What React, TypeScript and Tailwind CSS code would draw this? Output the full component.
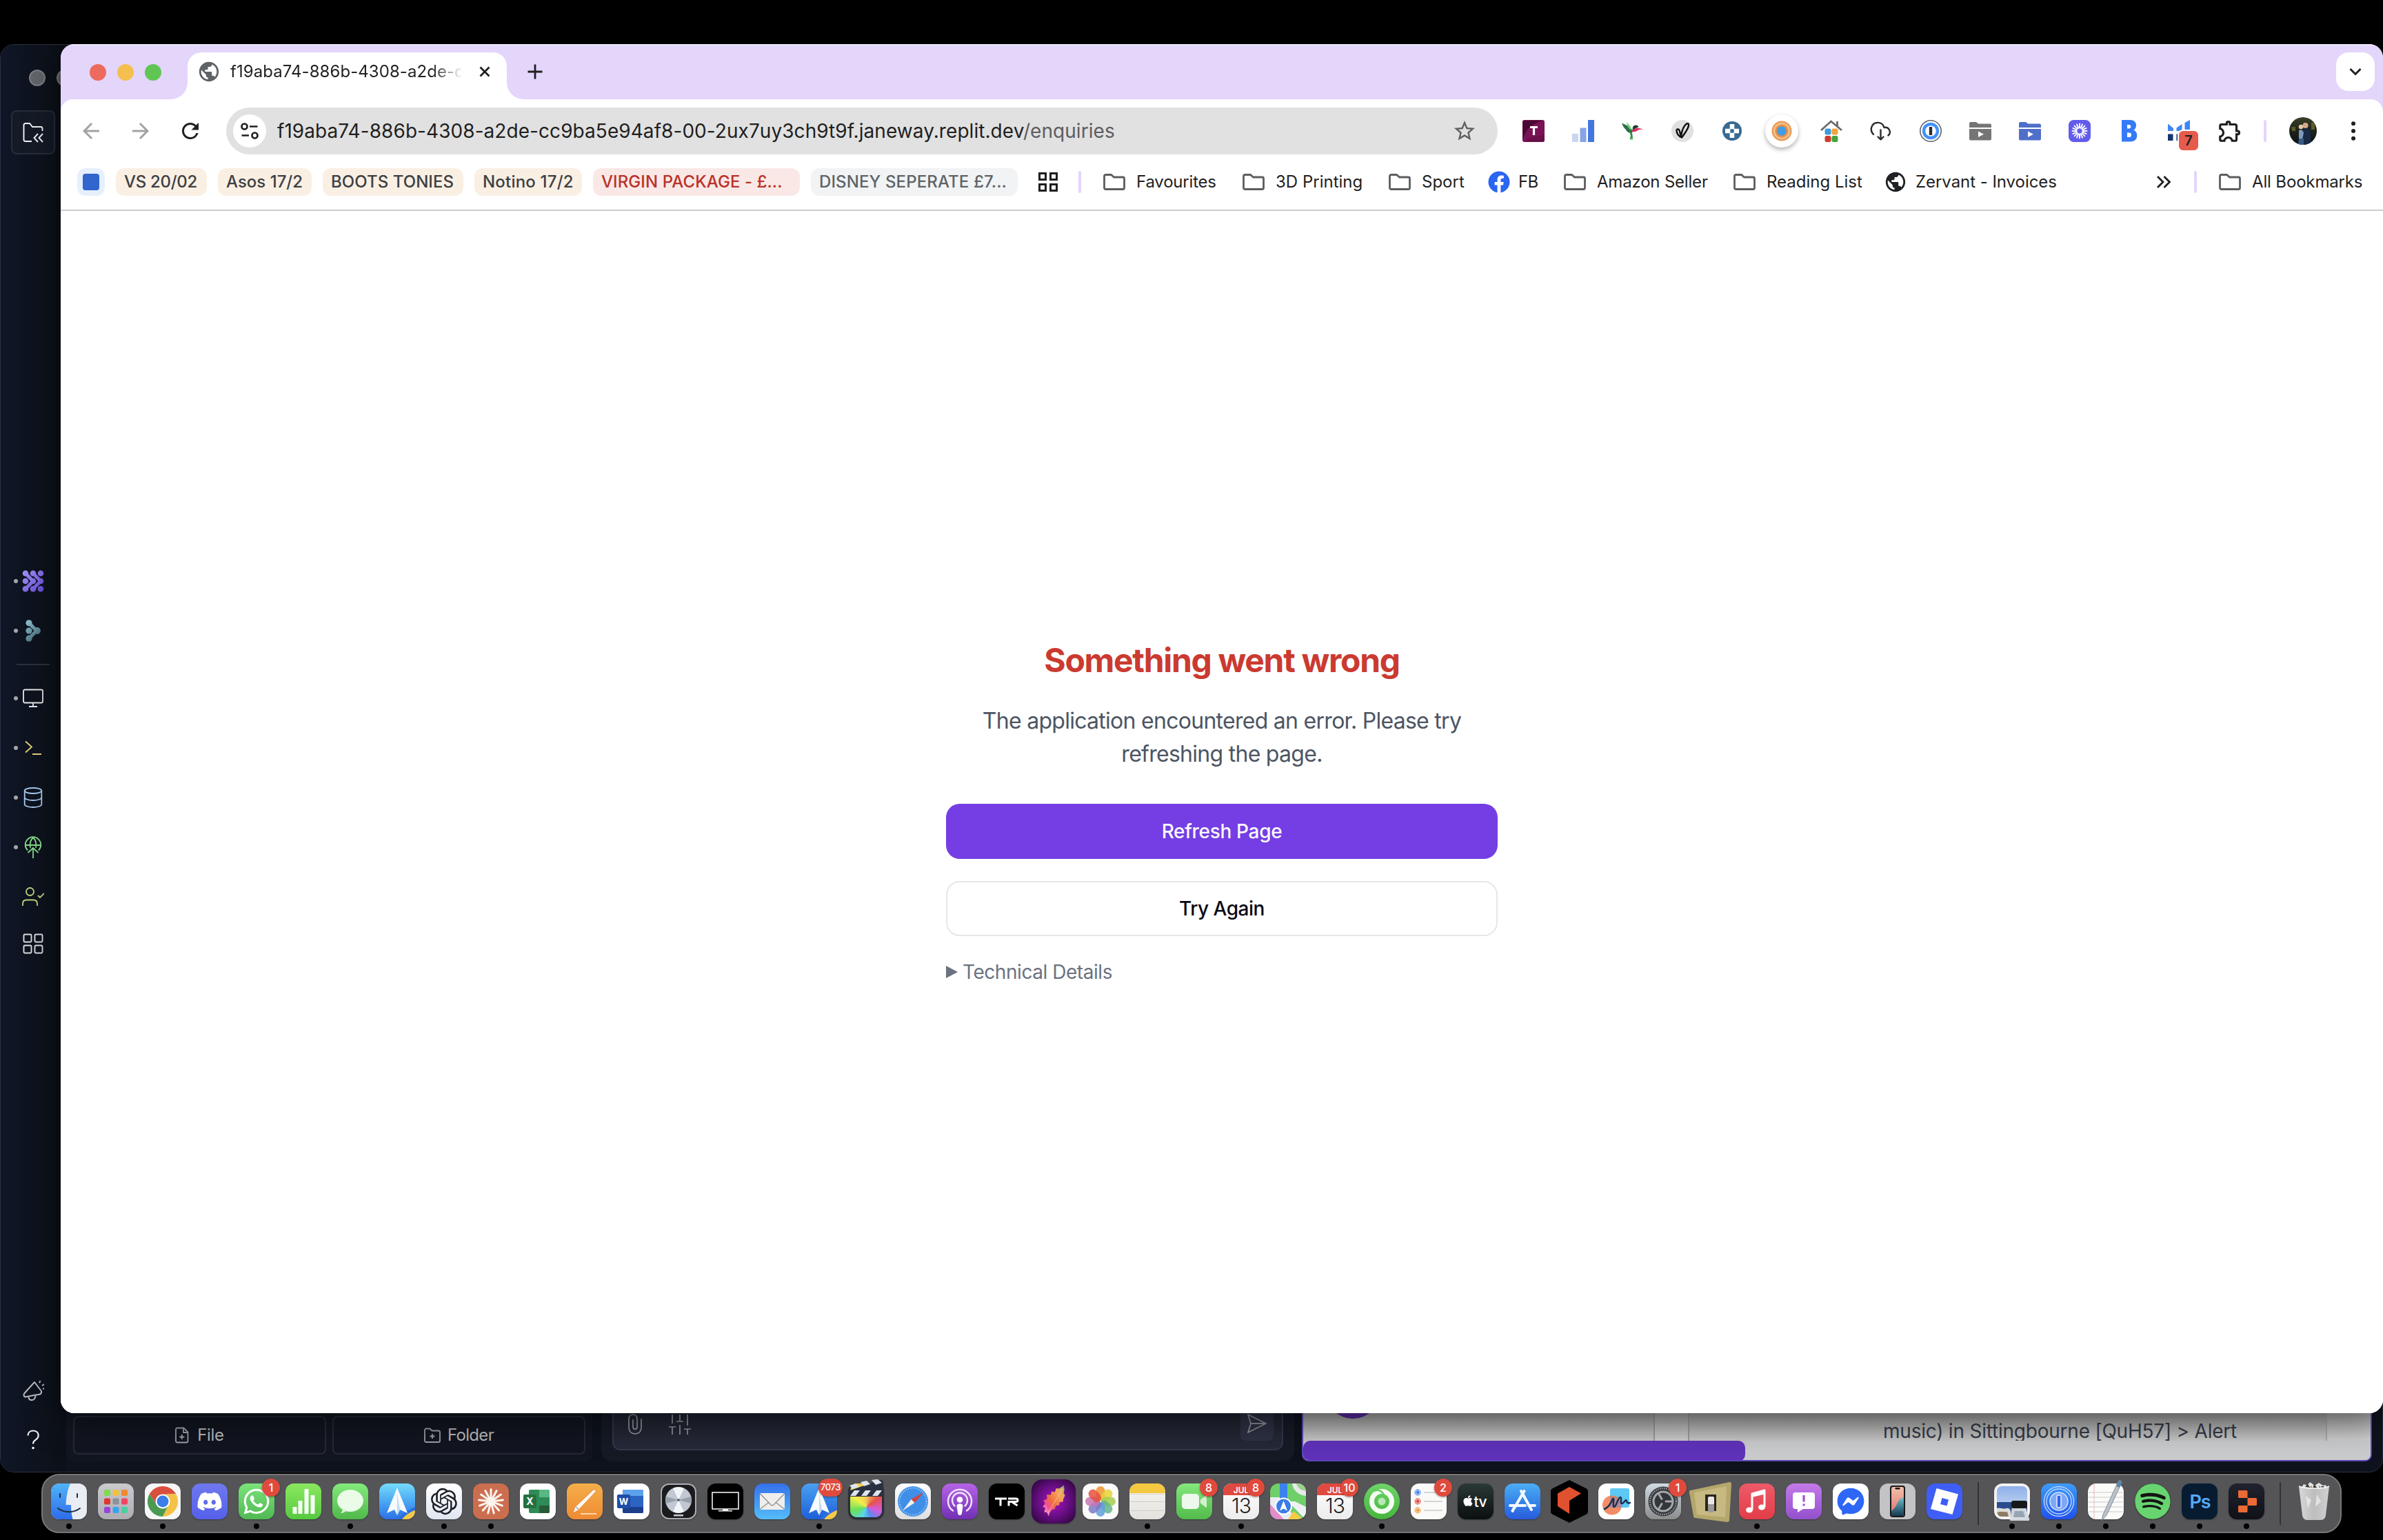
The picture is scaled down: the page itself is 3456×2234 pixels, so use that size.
import type { ReactNode } from "react";
import { MdPublic, MdStarBorder, MdOutlineExtension, MdRefresh, MdArrowBack, MdArrowForward } from "react-icons/md";
import { FaDiscord, FaWhatsapp, FaSpotify, FaFacebookMessenger, FaApple, FaFacebook } from "react-icons/fa";
import { RiOpenaiFill } from "react-icons/ri";

/* ---------- shared drawing helpers ---------- */

function Svg({ s = 32, children, className = "" }: { s?: number; children: ReactNode; className?: string }) {
  return (
    <svg viewBox={`0 0 ${s} ${s}`} width={s} height={s} fill="none" className={`shrink-0 ${className}`}>
      {children}
    </svg>
  );
}

function Rays({ n, r1, r2, w, c, color }: { n: number; r1: number; r2: number; w: number; c: number; color: string }) {
  return (
    <g stroke={color} strokeWidth={w} strokeLinecap="round">
      {Array.from({ length: n }, (_, i) => {
        const a = (i / n) * Math.PI * 2;
        return (
          <line
            key={i}
            x1={c + Math.sin(a) * r1}
            y1={c - Math.cos(a) * r1}
            x2={c + Math.sin(a) * r2}
            y2={c - Math.cos(a) * r2}
          />
        );
      })}
    </g>
  );
}

/* ---------- editor window behind the browser ---------- */

const railItems: { dot: boolean; icon: ReactNode }[] = [
  {
    dot: true,
    icon: (
      <Svg>
        <defs>
          <linearGradient id="agent" x1="0" y1="0" x2="32" y2="32" gradientUnits="userSpaceOnUse">
            <stop offset="0" stopColor="#a596f3" />
            <stop offset="1" stopColor="#6448d8" />
          </linearGradient>
        </defs>
        <g fill="url(#agent)">
          <circle cx="5" cy="4.800" r="4.300" />
          <circle cx="5" cy="16" r="4.300" />
          <circle cx="5" cy="27.200" r="4.300" />
          <circle cx="16" cy="4.800" r="4.300" />
          <circle cx="16" cy="16" r="4.300" />
          <circle cx="16" cy="27.200" r="4.300" />
          <circle cx="27" cy="4.800" r="4.300" />
          <circle cx="27" cy="16" r="4.300" />
          <circle cx="27" cy="27.200" r="4.300" />
        </g>
        <path d="M5 4.800L16 16 5 27.200M16 4.800L27 16 16 27.200" stroke="url(#agent)" strokeWidth="4.800" strokeLinejoin="round" />
      </Svg>
    ),
  },
  {
    dot: true,
    icon: (
      <Svg>
        <defs>
          <linearGradient id="assist" x1="4" y1="2" x2="28" y2="30" gradientUnits="userSpaceOnUse">
            <stop offset="0" stopColor="#92c4d4" />
            <stop offset="1" stopColor="#3a5f6b" />
          </linearGradient>
        </defs>
        <g fill="url(#assist)">
          <circle cx="10" cy="4.800" r="4.600" />
          <circle cx="10" cy="16" r="4.600" />
          <circle cx="10" cy="27.200" r="4.600" />
          <circle cx="22" cy="16" r="4.900" />
        </g>
        <path d="M10 4.800L21 16 10 27.200" stroke="url(#assist)" strokeWidth="5" strokeLinejoin="round" />
      </Svg>
    ),
  },
  {
    dot: true,
    icon: (
      <Svg>
        <g stroke="#e6e8ea" strokeWidth="1.800">
          <rect x="2" y="3.500" width="28" height="19" rx="2" />
          <path d="M16 23v5M10 28h12" />
        </g>
      </Svg>
    ),
  },
  {
    dot: true,
    icon: (
      <Svg>
        <path d="M5 6.500l9 8-9 8M15 25h13" stroke="#e6d37c" strokeWidth="1.800" />
      </Svg>
    ),
  },
  {
    dot: true,
    icon: (
      <Svg>
        <g stroke="#a9cbf2" strokeWidth="1.800">
          <ellipse cx="16" cy="6" rx="12.300" ry="4" />
          <path d="M3.700 6v20c0 2 5.500 4 12.300 4s12.300-2 12.300-4V6" />
          <path d="M3.700 16c0 2 5.500 4 12.300 4s12.300-2 12.300-4" />
        </g>
      </Svg>
    ),
  },
  {
    dot: true,
    icon: (
      <Svg>
        <g stroke="#86dc88" strokeWidth="1.800">
          <path d="M8 20.500A11.300 11.300 0 1 1 24 20.500" />
          <path d="M4.700 13h22.600M12 17c-1-5 0-11 4-15 4 4 5 10 4 15" />
          <path d="M16 32V17.500M8.500 24l7.500-7 7.500 7" />
        </g>
      </Svg>
    ),
  },
  {
    dot: false,
    icon: (
      <Svg>
        <g stroke="#bcd77c" strokeWidth="1.800">
          <circle cx="11.500" cy="8.500" r="5.500" />
          <path d="M1 29v-3c0-3.500 2-5.500 5.500-5.500h10c3.500 0 5.500 2 5.500 5.500v3" />
          <path d="M23 14l3 3 6-6" />
        </g>
      </Svg>
    ),
  },
  {
    dot: false,
    icon: (
      <Svg>
        <g stroke="#dcdfe2" strokeWidth="1.900">
          <rect x="2.500" y="2.500" width="11" height="11" rx="1.500" />
          <rect x="18.500" y="2.500" width="11" height="11" rx="1.500" />
          <rect x="2.500" y="18.500" width="11" height="11" rx="1.500" />
          <rect x="18.500" y="18.500" width="11" height="11" rx="1.500" />
        </g>
      </Svg>
    ),
  },
];

function RailRow({ dot, children, short }: { dot: boolean; children: ReactNode; short?: boolean }) {
  return (
    <div className={`flex w-24 items-center pl-[19px] ${short ? "h-16" : "h-[72px]"}`}>
      <span className={`h-1.5 w-1.5 rounded-full ${dot ? "bg-[#a3a5aa]" : ""}`} />
      <span className="ml-1.5">{children}</span>
    </div>
  );
}

function Rail() {
  return (
    <div className="flex w-[95px] shrink-0 flex-col bg-linear-to-r from-[#0f1626] to-[#0c1017] pb-[10px]">
      <div className="flex h-[95px] items-center gap-4 pl-[41px]">
        <span className="h-6 w-6 shrink-0 rounded-full border-2 border-[#7d7f85] bg-[#63656c]" />
        <span className="h-6 w-6 shrink-0 rounded-full border-2 border-[#7d7f85] bg-[#63656c]" />
      </div>
      <div className="ml-[15px] flex h-16 w-16 items-center justify-center rounded-lg border-2 border-[#282d3b] bg-[#151a27]">
        <Svg>
          <path
            d="M14 29H5a2.500 2.500 0 0 1-2.500-2.500v-21A2.500 2.500 0 0 1 5 3h6l4 5h12a2.500 2.500 0 0 1 2.500 2.500V14"
            stroke="#f2f3f5"
            strokeWidth="1.900"
          />
          <path d="M23 18l-5.500 6 5.500 6M30 18l-5.500 6 5.500 6" stroke="#f2f3f5" strokeWidth="1.900" />
        </Svg>
      </div>
      <div className="h-[583px]" />
      {railItems.slice(0, 2).map((it, i) => (
        <RailRow key={i} dot={it.dot}>{it.icon}</RailRow>
      ))}
      <div className="flex h-[26px] items-center pl-[23px]">
        <span className="h-0.5 w-12 bg-[#2a303d]" />
      </div>
      {railItems.slice(2).map((it, i) => (
        <RailRow key={i} dot={it.dot} short={i === 5}>{it.icon}</RailRow>
      ))}
      <div className="mt-auto">
        <RailRow dot={false}>
          <Svg>
            <g stroke="#b9bbbf" strokeWidth="2" strokeLinejoin="round">
              <path d="M18 4L3.500 20c-1.500 2-1.200 4.500.5 5.500 9-1.500 16-3 22-4 2-1 2.500-2.500 2-4.500z" />
              <path d="M9.500 25.500c0 3 2 4.500 4.500 4.500s5-1.500 5.500-6.500" />
              <path d="M25 5l1.500-3M29 9l3-2M30 13.500h2.500" />
            </g>
          </Svg>
        </RailRow>
        <RailRow dot={false}>
          <Svg>
            <path d="M8.500 9.500C8.500 5.500 11.500 2.500 16 2.500s7.700 2.800 7.700 6.800c0 3-1.600 4.800-4 6.400-2.500 1.700-3.700 3-3.700 5.800" stroke="#f2f3f5" strokeWidth="2.200" />
            <circle cx="16" cy="27.500" r="1.800" fill="#f2f3f5" />
          </Svg>
        </RailRow>
      </div>
    </div>
  );
}

function FilePanel() {
  return (
    <div className="flex h-[100px] w-[763px] items-end gap-[9px] rounded-b-lg bg-[#121620] p-[10px] text-2xl tracking-[-0.3px] text-[#b9bbbf]">
      <div className="flex h-14 w-[367px] items-center justify-center gap-3 rounded-lg border-2 border-[#262a37] bg-[#12151f]">
        <svg width="20" height="24" viewBox="0 0 20 24" fill="none" stroke="#a0a2a8" strokeWidth="1.800">
          <path d="M3 1.500h9.500l6 6V20.500a2 2 0 0 1-2 2H3a2 2 0 0 1-2-2v-17a2 2 0 0 1 2-2z" />
          <path d="M12 1.500V8h6.500M9.800 11v7M6.300 14.500h7" />
        </svg>
        <span>File</span>
      </div>
      <div className="flex h-14 w-[367px] items-center justify-center rounded-lg border-2 border-[#262a37] bg-[#12151f]">
        <svg width="24" height="24" viewBox="0 0 24 24" fill="none" stroke="#a0a2a8" strokeWidth="1.800">
          <path d="M3 2.500h5.500l3 3H21a2 2 0 0 1 2 2v12.500a2 2 0 0 1-2 2H3a2 2 0 0 1-2-2v-15.500a2 2 0 0 1 2-2z" />
          <path d="M12 10v7M8.500 13.500h7" />
        </svg>
        <span className="ml-2.5 tracking-[-0.7px]">Folder</span>
      </div>
    </div>
  );
}

function ChatPanel() {
  return (
    <div className="ml-[13px] flex h-[100px] w-[1005px] items-end rounded-b-2xl bg-[#161a25] p-4">
      <div className="flex h-[84px] w-full items-end rounded-b-xl border-2 border-[#33364a] bg-linear-to-b from-[#1c202b] to-[#262938] pr-3 pb-3 pl-[14px]">
        <Svg className="mb-2">
          <path
            d="M26 8v12.500c0 6-3.500 9.500-9 9.500s-9-3.500-9-9.500V8.500c0-4 2.500-6.500 6-6.500s6 2.500 6 6.500V20c0 2-1.200 3.200-3 3.200s-3-1.200-3-3.200V9"
            stroke="#9597a0"
            strokeWidth="1.700"
          />
        </Svg>
        <Svg className="mb-2 ml-[34px]">
          <path
            d="M5 2v13M5 20v11M0 20h10M16 2v10M11 12h10M16 17v14M27 2v16M22 23h10M27 23v8"
            stroke="#9597a0"
            strokeWidth="1.700"
          />
        </Svg>
        <div className="ml-auto flex h-14 w-12 items-end justify-center rounded-lg bg-[#2e3144] pb-[11px]">
          <svg width="28" height="28" viewBox="0 0 28 28" fill="none" stroke="#8a8c92" strokeWidth="1.900" strokeLinejoin="round">
            <path d="M1 1l26 13L1 27l4-13zM5 14h22" />
          </svg>
        </div>
      </div>
    </div>
  );
}

function PreviewPanel() {
  return (
    <div className="ml-[11px] flex h-[100px] w-[1552px] flex-col overflow-hidden rounded-b-[10px] border-2 border-[#5b46b8] bg-[#c6c8ca]">
      <div className="flex h-[68px] bg-linear-to-b from-[#a2a2a2] from-40% to-[#c8c8c8]">
        <div className="flex w-[510px] items-start border-r-2 border-[#98989b] pl-8">
          <span className="mt-[-44px] h-20 w-20 rounded-full bg-[#5a2aa0]" />
        </div>
        <div className="w-[50px] border-r-2 border-[#9b9ba2] bg-white/10" />
        <div className="flex w-[925px] items-end border-r-2 border-[#a9a9ac] pl-[281px]">
          <span className="h-[34px] whitespace-nowrap text-[28px] leading-10 tracking-[-0.22px] text-[#343a48]">
            music) in Sittingbourne [QuH57] &gt; Alert
          </span>
        </div>
        <div className="grow bg-white/15" />
      </div>
      <div className="flex h-[28px] bg-[#c9cbcd]">
        <span className="h-[30px] w-[641px] rounded-r-[10px] rounded-tl-[10px] bg-[#5f32b9]" />
      </div>
    </div>
  );
}

function EditorWindow() {
  return (
    <div className="absolute top-16 left-0 flex h-[2072px] w-[3456px] overflow-hidden rounded-[20px] border border-[#2b3140] bg-[#0d121c]">
      <Rail />
      <div className="flex grow items-end pb-[15px]">
        <FilePanel />
        <ChatPanel />
        <PreviewPanel />
      </div>
    </div>
  );
}

/* ---------- browser window ---------- */

const extensionIcons: ReactNode[] = [
  <Svg>
    <rect width="32" height="32" rx="3" fill="#7a1355" />
    <path d="M2 24C6 12 16 4 30 1H3a3 3 0 0 0-3 3v24z" fill="#4a0733" />
    <path d="M2 32c6-6 16-9 30-10v7a3 3 0 0 1-3 3z" fill="#6a0f49" />
    <path d="M11 10.500h11M16.500 10.500V22" stroke="#fff" strokeWidth="3.200" />
  </Svg>,
  <Svg>
    <path d="M0 20h9v12H0z" fill="#c9d6f0" />
    <path d="M11.500 11.500h9V32h-9z" fill="#86a4e6" />
    <path d="M23 0h9v32h-9z" fill="#4277de" />
  </Svg>,
  <Svg>
    <path d="M0 4.500c4 1.500 8 3.500 12 6l4 4.500-1 4c-5 0-8-2-9-5C3.500 12 1.500 9 0 4.500z" fill="#2c7048" />
    <path d="M7 3l5 6 3 6-3.500-1.500-3-4z" fill="#6ed070" />
    <path d="M16 10c2-3 6-3.500 8.500 0l-5 2.500-4 3.500z" fill="#17402f" />
    <path d="M14.500 16.500c1.500-3 5-4.800 9-5l8 2c-4-.2-7 .5-9 2-2 1.500-4 2-6.500 1.800z" fill="#e0315f" />
    <path d="M11.500 17c2.500 1 4 2.500 4 5l.5 5-2 2-2.500-1.500 1.500-4z" fill="#2f8a45" />
    <path d="M12.500 26l3 .5.500 2.500-3-.5z" fill="#62e05a" />
  </Svg>,
  <Svg>
    <circle cx="16" cy="16" r="16" fill="#e0e0e0" />
    <path
      d="M15 25.500c-4-1.500-7.500-6-7.500-10 0-2.500 3-3 4-.5.800 2.500 1.500 5 2.500 8 1-6 3-14 8-17.500 3-1.500 3.500 1.500 2.500 4.500-1.500 4.500-5 9.500-9.500 15.500z"
      stroke="#0d0d0d"
      strokeWidth="2.400"
      strokeLinejoin="round"
    />
  </Svg>,
  <Svg>
    <circle cx="16" cy="16" r="14" fill="#396a92" />
    <path d="M12.700 6h6.600v6.700H26v6.600h-6.700V26h-6.600v-6.700H6v-6.600h6.700z" fill="#fff" />
    <rect x="13.300" y="13.300" width="5.400" height="5.400" fill="#396a92" />
  </Svg>,
  <div className="flex h-12 w-12 shrink-0 items-center justify-center rounded-full bg-white shadow-[0_3px_6px_rgba(0,0,0,0.3)]">
    <Svg>
      <circle cx="16" cy="16" r="14.500" fill="#e89a55" />
      <circle cx="16" cy="16" r="11" fill="none" stroke="#f3bf86" strokeWidth="2.500" />
      <circle cx="16" cy="16" r="8.500" fill="#e58a43" />
      <circle cx="16" cy="16" r="6.800" fill="#3f9fe6" />
    </Svg>
  </div>,
  <Svg>
    <path d="M1 15L15.500 2 31 15M24.500 2v7" stroke="#6b6b6b" strokeWidth="2.800" />
    <rect x="6.500" y="12.500" width="9" height="9" rx="2.500" fill="#3f9bdc" />
    <rect x="16.500" y="12.500" width="9" height="9" rx="2.500" fill="#f2a53a" />
    <rect x="6.500" y="23" width="9" height="9" rx="2.500" fill="#cf3a2c" />
    <rect x="16.500" y="23" width="9" height="9" rx="2.500" fill="#45a53c" />
  </Svg>,
  <Svg>
    <g stroke="#2b2b2b" strokeWidth="2.400" strokeLinecap="round" strokeLinejoin="round">
      <path d="M5 21C-1 15 2 5 10 4c5-.8 9 2 10.500 7 3-.8 6 .5 7.500 3.500 1.500 2.800.8 6-1.500 8" />
      <path d="M15.500 14.500V28M11.500 24.500l4 4 4-4" />
    </g>
  </Svg>,
  <Svg>
    <circle cx="16" cy="16" r="15.200" fill="#fff" stroke="#5f6368" strokeWidth="1.600" />
    <circle cx="16" cy="16" r="12.200" fill="#4290fb" />
    <circle cx="16" cy="16" r="7.800" fill="#fff" />
    <rect x="13.800" y="10" width="4.400" height="12" fill="#2c2c2c" />
  </Svg>,
  <Svg>
    <path d="M0 5a2 2 0 0 1 2-2h8l3 2.500h17a2 2 0 0 1 2 2V11H0zM0 13h32v14.500a2 2 0 0 1-2 2H2a2 2 0 0 1-2-2z" fill="#757575" />
    <path d="M13 16.500v8.500l8-4.250z" fill="#fff" />
  </Svg>,
  <Svg>
    <path d="M0 5a2 2 0 0 1 2-2h8l3 2.500h17a2 2 0 0 1 2 2V11H0zM0 13h32v14.500a2 2 0 0 1-2 2H2a2 2 0 0 1-2-2z" fill="#506fca" />
    <path d="M13 16.500v8.500l8-4.250z" fill="#fff" />
  </Svg>,
  <Svg>
    <rect width="32" height="32" rx="7.500" fill="#615cec" />
    <Rays n={16} r1={4.500} r2={10.500} w={1.900} c={16} color="#fff" />
  </Svg>,
  <Svg>
    <path
      fillRule="evenodd"
      d="M5 0h12c6 0 9 3 9 8 0 3-1.200 5.200-3.500 6.800 3.200 1.400 4.800 4 4.800 7.700 0 6-4 9-10 9H5zM13 7v5.500h2.500c1.800 0 2.800-1 2.800-2.800S17.300 7 15.500 7zM13 18.500V25h3c2 0 3-1.200 3-3.300s-1-3.200-3-3.200z"
      fill="#357bf8"
    />
  </Svg>,
  <div className="relative h-8 w-8">
    <Svg>
      <path d="M0 5.500l8 6.500V16H0z" fill="#3f87f5" />
      <path d="M12.500 11.500l8-5.500V16h-8z" fill="#3f87f5" />
      <path d="M24.500 4l7.500-4v16h-7.500z" fill="#3f87f5" />
      <path d="M0 20.500h7.500V30H0zM12.500 20.500h8V30h-8z" fill="#15356e" />
    </Svg>
    <span className="absolute top-3.5 left-3.5 flex h-[32px] w-[32px] items-center justify-center rounded-[8px] border-2 border-white bg-[#e55c4d] text-xl font-semibold text-[#202124]">
      7
    </span>
  </div>,
];

function TabStrip() {
  return (
    <div className="flex h-20 items-end bg-[#e4d5fb] pl-[42px] shadow-[inset_0_2px_0_#f0e8fd]">
      <div className="flex h-[78px] items-center gap-4 self-start pt-1">
        <span className="h-6 w-6 rounded-full bg-[#ec6a5e]" />
        <span className="h-6 w-6 rounded-full bg-[#f5bf4f]" />
        <span className="h-6 w-6 rounded-full bg-[#61c554]" />
      </div>
      <span className="ml-[14px] h-6 w-6 bg-[radial-gradient(circle_at_0_0,transparent_23.5px,white_24px)]" />
      <div className="flex h-[68px] w-[463px] items-center rounded-t-[20px] bg-white pb-3 pl-[14px]">
        <MdPublic className="h-[34px] w-[34px] shrink-0 text-[#5f6368]" />
        <span className="ml-3.5 w-[344px] bg-linear-to-r from-[#202124] from-85% to-transparent to-98% bg-clip-text text-2xl whitespace-nowrap tracking-[0.06px] text-transparent">
          f19aba74-886b-4308-a2de-c
        </span>
        <svg width="16" height="16" viewBox="0 0 16 16" className="ml-[17px] shrink-0">
          <path d="M1.500 1.500l13 13M14.500 1.500l-13 13" stroke="#1f1f1f" strokeWidth="2.800" />
        </svg>
      </div>
      <span className="h-6 w-6 bg-[radial-gradient(circle_at_100%_0,transparent_23.5px,white_24px)]" />
      <svg width="22" height="22" viewBox="0 0 22 22" className="mb-[29px] ml-[6px]">
        <path d="M11 0.500v21M0.500 11h21" stroke="#1f1f1f" strokeWidth="2.800" />
      </svg>
      <div className="mr-3 mb-3 ml-auto flex h-14 w-14 items-center justify-center rounded-[18px] bg-white">
        <svg width="18" height="12" viewBox="0 0 18 12">
          <path d="M1.500 2l7.500 7.500L16.500 2" stroke="#1f1f1f" strokeWidth="3" fill="none" />
        </svg>
      </div>
    </div>
  );
}

function Avatar() {
  return (
    <svg width="40" height="40" viewBox="0 0 40 40" className="ml-[33px] shrink-0">
      <defs>
        <clipPath id="avatar"><circle cx="20" cy="20" r="20" /></clipPath>
        <linearGradient id="avatarBg" x1="0" y1="0" x2="0" y2="1">
          <stop offset="0" stopColor="#3a4028" />
          <stop offset="0.500" stopColor="#1d2219" />
          <stop offset="1" stopColor="#0d1118" />
        </linearGradient>
      </defs>
      <g clipPath="url(#avatar)">
        <rect width="40" height="40" fill="url(#avatarBg)" />
        <path d="M32 8h5v10h-5zM3 14h6v6H4z" fill="#5c5c2a" />
        <path d="M19 18c6-4 12-1 12 6v18H17z" fill="#182a45" />
        <path d="M14 19c3-2 6 0 7 4l-2 9h-5z" fill="#7f9cc0" />
        <path d="M14 31h7v10h-8z" fill="#3a5a86" />
        <circle cx="23.500" cy="12" r="4" fill="#d8a88c" />
        <circle cx="17" cy="14" r="3.300" fill="#e6c7a8" />
      </g>
    </svg>
  );
}

function Toolbar() {
  return (
    <div className="flex h-[92px] shrink-0 items-center pl-[24px]">
      <div className="flex gap-8">
        <div className="flex h-10 w-10 items-center justify-center"><MdArrowBack className="h-9 w-9 text-[#a3a3a3]" /></div>
        <div className="flex h-10 w-10 items-center justify-center"><MdArrowForward className="h-9 w-9 text-[#a3a3a3]" /></div>
        <div className="flex h-10 w-10 items-center justify-center"><MdRefresh className="h-9 w-9 text-[#1f1f1f]" /></div>
      </div>
      <div className="ml-8 flex h-[68px] w-[1844px] items-center rounded-full bg-[#e1e1e1] pl-2.5">
        <div className="flex h-12 w-12 items-center justify-center rounded-full bg-white">
          <svg width="26" height="24" viewBox="0 0 26 24" fill="none" stroke="#1f1f1f" strokeWidth="2.700">
            <circle cx="5.500" cy="5.500" r="4" />
            <path d="M13 5.500h11.500M1.500 18.500H12" />
            <circle cx="20.500" cy="18.500" r="4" />
          </svg>
        </div>
        <span className="ml-4 whitespace-nowrap text-[28px] tracking-[0.06px] text-[#1f1f1f]">
          f19aba74-886b-4308-a2de-cc9ba5e94af8-00-2ux7uy3ch9t9f.janeway.replit.dev
          <span className="text-[#5c5d60]">/enquiries</span>
        </span>
        <MdStarBorder className="mr-[30px] ml-auto h-9 w-9 text-[#5f6062]" />
      </div>
      <div className="ml-9 flex items-center gap-10">
        {extensionIcons.map((icon, i) => (
          <div key={i} className="flex h-8 w-8 items-center justify-center">{icon}</div>
        ))}
        <div className="flex h-8 w-8 items-center justify-center pl-[3px]">
          <MdOutlineExtension className="h-[38px] w-[38px] shrink-0 text-[#1f1f1f]" />
        </div>
      </div>
      <span className="ml-[35px] h-8 w-1 rounded-full bg-[#e4d5fb]" />
      <Avatar />
      <svg width="8" height="28" viewBox="0 0 8 28" className="ml-[49px]" fill="#1f1f1f">
        <circle cx="4" cy="3.200" r="3" />
        <circle cx="4" cy="14" r="3" />
        <circle cx="4" cy="24.800" r="3" />
      </svg>
    </div>
  );
}

function FolderIcon() {
  return (
    <svg width="32" height="24" viewBox="0 0 32 24" fill="none" className="shrink-0">
      <path
        d="M3.500 1.500h8l4 3.500h13a2 2 0 0 1 2 2v13.500a2 2 0 0 1-2 2h-25a2 2 0 0 1-2-2v-17a2 2 0 0 1 2-2z"
        stroke="#5c5d60"
        strokeWidth="2.800"
      />
    </svg>
  );
}

const chips = [
  { label: "VS 20/02", box: "w-[132px] bg-[#faefe3] text-[#3c4043] tracking-[-0.3px]" },
  { label: "Asos 17/2", box: "w-[136px] bg-[#faefe3] text-[#3c4043]" },
  { label: "BOOTS TONIES", box: "w-[204px] bg-[#faefe3] text-[#3c4043] tracking-[0.05px]" },
  { label: "Notino 17/2", box: "w-[156px] bg-[#faefe3] text-[#3c4043] tracking-[0.2px]" },
  { label: "VIRGIN PACKAGE - £...", box: "w-[300px] bg-[#f9e8e6] text-[#b93229] tracking-[0.07px]" },
  { label: "DISNEY SEPERATE £7...", box: "w-[300px] bg-[#f1f3f4] text-[#5f6368] tracking-[0.12px]" },
];

const bookmarks = [
  { label: "Favourites", box: "w-[202px] tracking-[-0.2px]", kind: "folder" },
  { label: "3D Printing", box: "w-[212px]", kind: "folder" },
  { label: "Sport", box: "w-[144px]", kind: "folder" },
  { label: "FB", box: "w-[110px] tracking-[-0.6px]", kind: "fb" },
  { label: "Amazon Seller", box: "w-[246px] tracking-[-0.2px]", kind: "folder" },
  { label: "Reading List", box: "w-[221px]", kind: "folder" },
  { label: "Zervant - Invoices", box: "w-[300px] tracking-[-0.05px]", kind: "globe" },
];

function BookmarkBar() {
  return (
    <div className="flex h-[70px] shrink-0 items-start border-b-2 border-[#cccccc] pt-2 pl-6 text-2xl text-[#1f1f1f]">
      <div className="flex h-10 w-full items-center">
        <div className="flex gap-4">
          <div className="flex h-10 w-10 items-center justify-center rounded-xl bg-[#e6effd]">
            <span className="h-6 w-6 rounded-sm bg-[#3066cd]" />
          </div>
          {chips.map((c) => (
            <div key={c.label} className={`flex h-10 items-center rounded-xl pl-3 font-medium whitespace-nowrap ${c.box}`}>
              {c.label}
            </div>
          ))}
        </div>
        <svg width="28" height="28" viewBox="0 0 28 28" fill="none" stroke="#1f1f1f" strokeWidth="3" className="ml-[30px] shrink-0">
          <path d="M1.500 1.500h9v9h-9zM17.500 1.500h9v9h-9zM1.500 17.500h9v9h-9zM17.500 17.500h9v9h-9z" />
        </svg>
        <span className="ml-[30px] h-8 w-1 shrink-0 rounded-full bg-[#e4d5fb]" />
        <div className="ml-8 flex">
          {bookmarks.map((b) => (
            <div key={b.label} className={`flex items-center whitespace-nowrap ${b.box}`}>
              {b.kind === "folder" && <FolderIcon />}
              {b.kind === "fb" && <FaFacebook className="h-8 w-8 shrink-0 text-[#2b66f2]" />}
              {b.kind === "globe" && <MdPublic className="-ml-[3px] h-[34px] w-[34px] shrink-0 text-[#202124]" />}
              <span className={b.kind === "folder" ? "ml-4" : "ml-3"}>{b.label}</span>
            </div>
          ))}
        </div>
        <svg width="22" height="18" viewBox="0 0 22 18" fill="none" stroke="#1f1f1f" strokeWidth="2.800" className="ml-[92px] shrink-0">
          <path d="M2 1l8 8-8 8M11.500 1l8 8-8 8" />
        </svg>
        <span className="ml-[33px] h-8 w-1 shrink-0 rounded-full bg-[#e4d5fb]" />
        <div className="ml-8 flex items-center whitespace-nowrap tracking-[-0.15px]">
          <FolderIcon />
          <span className="ml-4">All Bookmarks</span>
        </div>
      </div>
    </div>
  );
}

function ErrorPage() {
  return (
    <main className="flex grow items-center justify-center bg-white">
      <div className="flex w-[800px] flex-col text-center">
        <h1 className="text-5xl leading-[64px] font-bold tracking-[-1.32px] text-[#cb3a30]">Something went wrong</h1>
        <p className="mt-8 px-10 text-[32px] leading-[48px] tracking-[-0.72px] text-[#4c5562]">
          The application encountered an error. Please try
          <br />
          refreshing the page.
        </p>
        <button className="mt-12 h-20 rounded-[20px] bg-[#743ee4] text-[28px] font-medium tracking-[-0.32px] text-[#f9fafb]">
          Refresh Page
        </button>
        <button className="mt-8 h-20 rounded-[20px] border-2 border-[#e5e7eb] bg-white text-[28px] font-medium tracking-[-0.5px] text-[#0a0a14]">
          Try Again
        </button>
        <div className="mt-8 flex items-center text-[28px] leading-10 tracking-[-0.45px] text-[#6b7280]">
          <svg width="17" height="18" viewBox="0 0 17 18" fill="#6b7280"><path d="M0 0l17 9-17 9z" /></svg>
          <span className="ml-[7px]">Technical Details</span>
        </div>
      </div>
    </main>
  );
}

function BrowserWindow() {
  return (
    <div className="absolute top-16 left-[88px] flex h-[1986px] w-[3368px] flex-col overflow-hidden rounded-[20px] bg-[#e4d5fb] shadow-[0_10px_50px_rgba(0,0,0,0.55)]">
      <TabStrip />
      <div className="flex grow flex-col overflow-hidden rounded-t-[18px] bg-white">
        <Toolbar />
        <BookmarkBar />
        <ErrorPage />
      </div>
    </div>
  );
}

/* ---------- dock ---------- */

type DockApp = { bg: string; art: ReactNode; badge?: string; run?: boolean };

const planeArt = (
  <>
    <path d="M52 34v6a12 12 0 0 1-12 12h-8c6-9 12-14 20-18z" fill="#f6c945" />
    <path d="M52 34c-10 4-18 10-25 18h6c6-7 12-11 19-13z" fill="#2a6fe0" />
    <path d="M26 6c4 10 9 22 15 37l-11-5-4 8-4-8-11 5C17 28 22 16 26 6z" fill="#f6fbff" />
    <path d="M26 14v32l4-8z" fill="#c5d9ee" />
  </>
);

const calendarArt = (
  <>
    <path d="M0 17V12A12 12 0 0 1 12 0h28a12 12 0 0 1 12 12v5z" fill="#e0493f" />
    <text x="26" y="13.500" fontSize="12" fontWeight="600" fill="#fff" textAnchor="middle">JUL</text>
    <text x="26" y="43" fontSize="30" fontWeight="300" fill="#1d1d1f" textAnchor="middle" letterSpacing="-1">13</text>
  </>
);

const dockApps: DockApp[] = [
  {
    bg: "bg-[#e8ecf3]",
    run: true,
    art: (
      <>
        <defs>
          <linearGradient id="finder" x1="0" y1="0" x2="0" y2="1">
            <stop offset="0" stopColor="#4fb4f8" />
            <stop offset="1" stopColor="#2f6bea" />
          </linearGradient>
        </defs>
        <path d="M12 0h16c-4 9-6 20-6.500 31H29c0 8 1 15 2.500 21H12A12 12 0 0 1 0 40V12A12 12 0 0 1 12 0z" fill="url(#finder)" />
        <path d="M13 15v5M38 15v5M10 36c9 7 23 7 32 0" stroke="#1c2b3c" strokeWidth="2" strokeLinecap="round" />
      </>
    ),
  },
  {
    bg: "bg-linear-to-b from-[#c9c9ce] to-[#adadb3]",
    art: (
      <>
        {["#7ddb4f", "#f3c13b", "#ee8a2d", "#e0382f", "#8b9298", "#ef4561", "#9a45d8", "#34a4ef", "#4bcf9f"].map((f, i) => (
          <rect key={i} x={9 + (i % 3) * 12.5} y={9 + Math.floor(i / 3) * 12.5} width="9" height="9" rx="2" fill={f} />
        ))}
      </>
    ),
  },
  {
    bg: "bg-[#f6f6f6]",
    run: true,
    art: (
      <>
        <path d="M6.950 15A22 22 0 0 1 45.050 15L26 16A10 10 0 0 0 17.340 31z" fill="#d94f3d" />
        <path d="M6.950 15L17.340 31A10 10 0 0 0 34.660 31L26 48A22 22 0 0 1 6.950 15z" fill="#4a9a52" />
        <path d="M26 48L34.660 31A10 10 0 0 0 26 16L45.050 15A22 22 0 0 1 26 48z" fill="#f4c245" />
        <circle cx="26" cy="26" r="10.500" fill="#fff" />
        <circle cx="26" cy="26" r="8.500" fill="#3d7de8" />
      </>
    ),
  },
  {
    bg: "bg-linear-to-b from-[#7078ee] to-[#5560ea]",
    art: <FaDiscord x={7} y={7} size={38} color="#fff" />,
  },
  {
    bg: "bg-linear-to-b from-[#7ae37a] to-[#51b953]",
    run: true,
    badge: "1",
    art: <FaWhatsapp x={5} y={5} size={42} color="#fff" />,
  },
  {
    bg: "bg-linear-to-b from-[#8be860] to-[#55c940]",
    art: <path d="M10.500 34h6v10h-6zM18.500 25h6v19h-6zM27.500 8h6v36h-6zM36.500 17h6v27h-6z" fill="#f6fff3" />,
  },
  {
    bg: "bg-linear-to-b from-[#83ea7b] to-[#50b94b]",
    run: true,
    art: (
      <>
        <ellipse cx="26" cy="25" rx="19" ry="16" fill="#eafbe7" />
        <path d="M15 36c0 3-1 5-3 7 4 0 7-2 9-4z" fill="#d7f3d2" />
      </>
    ),
  },
  { bg: "bg-linear-to-b from-[#74dcfb] to-[#2d6fe6]", art: planeArt },
  {
    bg: "bg-linear-to-b from-white to-[#dfe6f1]",
    run: true,
    art: <RiOpenaiFill x={3} y={3} size={46} color="#1c1f25" />,
  },
  { bg: "bg-[#cb6e4f]", run: true, art: <Rays n={13} r1={2} r2={17.5} w={3} c={26} color="#fff5ef" /> },
  {
    bg: "bg-white",
    art: (
      <>
        <rect x="13" y="9" width="30" height="34" rx="2" fill="#2f8b57" />
        <path d="M28 9h13a2 2 0 0 1 2 2v9H28z" fill="#5ab884" />
        <path d="M28 32h15v9a2 2 0 0 1-2 2H28z" fill="#2a5b38" />
        <rect x="5" y="16" width="19" height="20" rx="2" fill="#24713f" />
        <text x="14.500" y="31" fontSize="14" fontWeight="700" fill="#fff" textAnchor="middle">X</text>
      </>
    ),
  },
  {
    bg: "bg-linear-to-b from-[#f4ae48] to-[#ee8b34]",
    art: (
      <>
        <path d="M20 44h23" stroke="#fbd7a8" strokeWidth="2" />
        <path d="M9 43l2.500-8.500L38 9.500c2.500-2 5.500.5 3.500 3L16.500 39z" fill="#fdf6ee" stroke="#d9782a" strokeWidth="0.800" />
        <path d="M13 34l4 3.500" stroke="#a9a29a" strokeWidth="1.500" />
      </>
    ),
  },
  {
    bg: "bg-white",
    art: (
      <>
        <rect x="13" y="9" width="30" height="34" rx="2" fill="#2c64c4" />
        <path d="M15 9h26a2 2 0 0 1 2 2v7H13v-7a2 2 0 0 1 2-2z" fill="#5da0ec" />
        <path d="M13 34h30v7a2 2 0 0 1-2 2H15a2 2 0 0 1-2-2z" fill="#1c3f8c" />
        <rect x="5" y="16" width="19" height="20" rx="2" fill="#1f4da8" />
        <text x="14.500" y="31" fontSize="13" fontWeight="700" fill="#fff" textAnchor="middle">W</text>
      </>
    ),
  },
  {
    bg: "bg-[#1b1b1d] border-2 border-[#a9adb5]",
    art: (
      <>
        <circle cx="26" cy="24" r="19" fill="#c2c8d2" />
        <path d="M26 24L18 7a19 19 0 0 1 16 0zM26 24l8 17a19 19 0 0 1-16 0z" fill="#f1f4f8" />
        <path d="M26 24L7.500 19a19 19 0 0 0 0 10zM26 24l18.500-5a19 19 0 0 1 0 10z" fill="#98a0ac" />
        <circle cx="26" cy="24" r="1.800" fill="#4a4f58" />
        <rect x="19" y="45" width="14" height="2.500" fill="#c8ccd2" />
      </>
    ),
  },
  {
    bg: "bg-black",
    art: (
      <>
        <rect x="7" y="13" width="38" height="24" stroke="#f2f2f2" strokeWidth="1.600" />
        <path d="M22 37h8v2h6v1.500H16V39h6z" fill="#f2f2f2" />
      </>
    ),
  },
  {
    bg: "bg-linear-to-b from-[#3670ea] to-[#55bdf9]",
    art: (
      <>
        <rect x="8" y="14" width="36" height="24" rx="2" fill="#efeeec" />
        <path d="M8.500 15L24 31c1.500 1.300 2.500 1.300 4 0l15.500-16M8.500 37L21 27.500M43.500 37L31 27.500" stroke="#8d8c8a" strokeWidth="1.200" />
      </>
    ),
  },
  { bg: "bg-linear-to-b from-[#4aa0f1] to-[#1f5fd8]", badge: "7073", run: true, art: planeArt },
  {
    bg: "bg-[conic-gradient(from_0deg_at_52%_70%,#f0c45a,#e8504a,#d65ad8,#5a8af0,#5ad8e8,#6ae05a,#f4f04a,#f0c45a)] border-3 border-t-0 border-[#2a2e38]",
    art: (
      <>
        <path d="M0 20V12L46-4c3-1 5 1 5 4l1 20z" fill="#2b3040" />
        <path d="M0 11h52v9H0z" fill="#2b3040" />
        <path d="M3 19l6-8h8l-6 8zM19 19l6-8h8l-6 8zM35 19l6-8h8l-6 8z" fill="#dfe5ec" />
        <path d="M2 4l9-3 5 5-9 3zM18-1l9-2 5 5-9 3zM34-4l9-1 6 5-9 3z" fill="#dfe5ec" />
      </>
    ),
  },
  {
    bg: "bg-linear-to-b from-white to-[#dedede]",
    art: (
      <>
        <circle cx="26" cy="26" r="22" fill="#3f8ee8" />
        <circle cx="26" cy="26" r="19.500" stroke="#b8dbfa" strokeWidth="2.500" strokeDasharray="0.800 2" />
        <path d="M41.500 13L23.500 23l5 5z" fill="#d8423a" />
        <path d="M11 39.500l12.500-16.500 5 5z" fill="#f1f1f1" />
      </>
    ),
  },
  {
    bg: "bg-linear-to-b from-[#b663e6] to-[#7230b4]",
    art: (
      <>
        <g stroke="#f3e4fc" strokeWidth="2.400" strokeLinecap="round">
          <path d="M16 39.500a17 17 0 1 1 20 0" />
          <path d="M18.500 32.500a11 11 0 1 1 15 0" />
        </g>
        <circle cx="26" cy="23.500" r="4.300" fill="#fff" />
        <path d="M21.500 32.500c0-4.500 9-4.500 9 0l-1.600 11c-.5 3.400-5.300 3.400-5.800 0z" fill="#fff" />
      </>
    ),
  },
  {
    bg: "bg-black",
    art: <path d="M9 22h17M17 22v10.500M28 22h11.500c2 0 2.500 1 2.500 2.200 0 1.500-.8 2.300-2.500 2.300H29v6M34 27l7.500 5" stroke="#fff" strokeWidth="3" />,
  },
  {
    bg: "bg-[radial-gradient(circle,#a512c0_0%,#6d0f8a_45%,#22042e_100%)] feather",
    art: (
      <>
        <defs>
          <linearGradient id="feather" x1="1" y1="0" x2="0" y2="1">
            <stop offset="0" stopColor="#2f9c8a" />
            <stop offset="0.150" stopColor="#d8b060" />
            <stop offset="0.300" stopColor="#f6a35c" />
            <stop offset="0.550" stopColor="#f0703f" />
            <stop offset="0.720" stopColor="#f04f90" />
            <stop offset="1" stopColor="#f9cfe0" />
          </linearGradient>
        </defs>
        <path d="M38 7l.8 5-1 4 1.700 3-2 4-.5 3.500-4 .5-.5 3.500-4 .5-1 4-3.500 1-2.500 3.500-1.500 4-1.700-4.500-3.300-.5 1.300-5-3-1 2.700-4-2-3.500 4.500-2-.7-5 5 .2.700-4 4 .8 1.500-4.500 3.500.5z" fill="url(#feather)" />
        <path d="M37.500 10L19 40" stroke="#fbe0c0" strokeWidth="0.700" opacity="0.700" />
      </>
    ),
  },
  {
    bg: "bg-[#fbfbfb]",
    art: (
      <>
        {["#f0932d", "#e8d23a", "#a6cc50", "#63b58a", "#5f9fdc", "#8078c4", "#c876b4", "#e6503f"].map((f, i) => (
          <rect key={f} x="19.500" y="4" width="13" height="21" rx="6.500" fill={f} opacity="0.850" transform={`rotate(${i * 45} 26 26)`} />
        ))}
      </>
    ),
  },
  {
    bg: "bg-linear-to-b from-[#f6f5f2] to-[#e4e2dd]",
    run: true,
    art: (
      <>
        <path d="M0 14v-2A12 12 0 0 1 12 0h28a12 12 0 0 1 12 12v2z" fill="#f4c83f" />
        <path d="M1 15.500h50" stroke="#c2b9a0" strokeWidth="1" strokeDasharray="1 1" />
        <path d="M1 26.500h50M1 39.500h50" stroke="#cfccc6" strokeWidth="1" />
      </>
    ),
  },
  {
    bg: "bg-linear-to-b from-[#84e87c] to-[#52bb4a]",
    badge: "8",
    art: (
      <>
        <rect x="8" y="15" width="25" height="22" rx="5" fill="#eef8ec" />
        <path d="M34.500 24l8-6.500c.8-.6 1.500-.2 1.500.8v15.400c0 1-.7 1.400-1.500.8l-8-6.500z" fill="#d5efd0" />
      </>
    ),
  },
  { bg: "bg-linear-to-b from-white to-[#ececec]", badge: "8", run: true, art: calendarArt },
  {
    bg: "bg-[#6fd06a]",
    art: (
      <>
        <path d="M0 30l20 22h-8A12 12 0 0 1 0 40z" fill="#e48ccc" />
        <path d="M0 20h14l24 32H20L0 30z" fill="#e8edf2" />
        <path d="M26 52l8-12 12 10-6 2z" fill="#f4cc48" />
        <path d="M52 34v6a12 12 0 0 1-4 9L26 26h10z" fill="#eef1f4" />
        <path d="M14 0h11v30H14z" fill="#3a83ee" />
        <path d="M32 0c1 9 8 17 20 18V12A12 12 0 0 0 40 0z" fill="#e6e9ec" />
        <path d="M38 0c1 5 6 10 14 11a12 12 0 0 0-12-11z" fill="#9ccf8c" />
        <circle cx="19.500" cy="33" r="12.500" fill="#fff" />
        <circle cx="19.500" cy="33" r="10.500" fill="#3a7ce8" />
        <path d="M19.500 25l5.500 14.500-5.500-3-5.500 3z" fill="#fff" />
      </>
    ),
  },
  { bg: "bg-linear-to-b from-white to-[#ececec]", badge: "10", art: calendarArt },
  {
    bg: "bg-linear-to-b from-[#6fd468] to-[#45b53c] round",
    run: true,
    art: (
      <>
        <circle cx="26" cy="26" r="14.500" stroke="#f4fbf2" strokeWidth="7" />
        <path d="M15 11c6-3 13 0 14.500 8" stroke="#62cc5a" strokeWidth="2.600" />
        <circle cx="26" cy="26" r="5.500" fill="#b9e8b4" />
      </>
    ),
  },
  {
    bg: "bg-[#fafaf8]",
    badge: "2",
    art: (
      <>
        {["#3a7ff0", "#e0453a", "#ee9a33"].map((f, i) => (
          <g key={f}>
            <circle cx="10" cy={13 + i * 13} r="3.800" stroke={f} strokeWidth="1.200" />
            <circle cx="10" cy={13 + i * 13} r="2.400" fill={f} />
            <path d={`M19 ${13 + i * 13}h27`} stroke="#c9c9c7" strokeWidth="1.500" />
          </g>
        ))}
      </>
    ),
  },
  {
    bg: "bg-linear-to-b from-[#2b3a37] to-[#0b0f10]",
    art: (
      <>
        <FaApple x={6} y={16} size={18} color="#fff" />
        <text x="23.500" y="34" fontSize="21" fontWeight="500" fill="#fff" letterSpacing="-0.500">tv</text>
      </>
    ),
  },
  {
    bg: "bg-linear-to-b from-[#4cadf3] to-[#2a5bdc]",
    art: <path d="M28.500 11L14 36M24 11l15 27M8 32h22M35 32h9M13.500 36l-2 4" stroke="#f6faff" strokeWidth="4" strokeLinecap="round" />,
  },
  {
    bg: "hex",
    art: (
      <>
        <path d="M26-5l24 12a5 5 0 0 1 3 5v28a5 5 0 0 1-3 5L26 57 2 45a5 5 0 0 1-3-5V12a5 5 0 0 1 3-5z" fill="#000" />
        <path d="M26 5l17 9.500L26 25v19L9 33V14.500z" fill="#e0522f" />
      </>
    ),
  },
  {
    bg: "bg-white",
    art: (
      <>
        <rect x="17" y="7" width="28" height="28" rx="3" fill="#5cc8f4" />
        <circle cx="20" cy="31.500" r="14" fill="#f0703f" opacity="0.800" />
        <path d="M17 20v15h17c0-8-8-16-17-15z" fill="#b08a9c" />
        <path d="M9 37c6-2 10-10 12-15 3-2-1 12 2 12s6-15 9-14-1 9 2 9 4-4 6-5c2 0 0 6 6 4" stroke="#1d3050" strokeWidth="2.500" strokeLinecap="round" />
      </>
    ),
  },
  {
    bg: "bg-linear-to-b from-[#cfdbe2] to-[#8c8d8c]",
    badge: "1",
    art: (
      <>
        <circle cx="26" cy="26" r="21.500" fill="#33363a" />
        <circle cx="26" cy="26" r="19" stroke="#9a9da0" strokeWidth="2.500" strokeDasharray="1.500 1.500" />
        <circle cx="26" cy="26" r="14" stroke="#a5a8ab" strokeWidth="3" />
        <path d="M26 26h13M26 26l-7-12M26 26l-7 12" stroke="#a5a8ab" strokeWidth="3" />
        <circle cx="26" cy="26" r="3" fill="#33363a" />
      </>
    ),
  },
  {
    bg: "hex",
    art: (
      <>
        <path d="M-2 10L54-2c2 0 3 1 3 3l-3 52c0 2-1 3-3 3L5 50c-2 0-3-1-3-3L-4 13c0-2 0-3 2-3z" fill="#b5a76c" />
        <path d="M3 13l47-9-2 45L7 45z" fill="#c7b982" />
        <rect x="19" y="16" width="16" height="24" fill="#2a2620" />
        <rect x="23" y="19" width="9" height="23" rx="2" fill="#e8e8e6" />
        <path d="M23 30h9v10a2 2 0 0 1-2 2h-5a2 2 0 0 1-2-2z" fill="#9a9a98" />
      </>
    ),
  },
  {
    bg: "bg-linear-to-b from-[#ee5a68] to-[#e23c48]",
    run: true,
    art: (
      <>
        <path d="M19 38V15l18-5v24" stroke="#fff" strokeWidth="3" strokeLinejoin="round" />
        <path d="M19 14l18-4.500v6L19 20z" fill="#fff" />
        <ellipse cx="15" cy="38.500" rx="5" ry="4" fill="#fff" />
        <ellipse cx="33" cy="34.500" rx="5" ry="4" fill="#fff" />
      </>
    ),
  },
  {
    bg: "bg-linear-to-b from-[#c47ae8] to-[#9350cc]",
    art: (
      <>
        <path d="M14 13h24a4 4 0 0 1 4 4v16a4 4 0 0 1-4 4H25l-8 5v-5h-3a4 4 0 0 1-4-4V17a4 4 0 0 1 4-4z" fill="#fff" />
        <path d="M26 17v9.500M26 29.500v3" stroke="#9a55d0" strokeWidth="3.200" />
      </>
    ),
  },
  { bg: "bg-white", art: <FaFacebookMessenger x={6} y={6} size={40} color="#2e67f6" /> },
  {
    bg: "bg-[#c3c3c5]",
    art: (
      <>
        <defs>
          <linearGradient id="phone" x1="0" y1="0" x2="0" y2="1">
            <stop offset="0" stopColor="#f2c0a8" />
            <stop offset="1" stopColor="#e0726e" />
          </linearGradient>
          <linearGradient id="phoneLow" x1="0" y1="0" x2="0" y2="1">
            <stop offset="0" stopColor="#6fc0cc" />
            <stop offset="1" stopColor="#173a50" />
          </linearGradient>
        </defs>
        <rect x="15" y="3" width="22" height="46" rx="4" fill="#17181c" />
        <rect x="17" y="5" width="18" height="42" rx="2.500" fill="url(#phone)" />
        <path d="M35 20v24.500a2.500 2.500 0 0 1-2.500 2.500h-13a2.500 2.500 0 0 1-2.500-2.500V40c3-3 6-5 8-10s5-9 10-10z" fill="url(#phoneLow)" />
        <rect x="22.500" y="6" width="7" height="2.500" rx="1.200" fill="#17181c" />
      </>
    ),
  },
  {
    bg: "bg-[#3f5ef5]",
    art: (
      <path fillRule="evenodd" d="M14.500 7L46 15.500 37.500 45 6 37zM22.500 21l-2.500 9 9.500 2.500 2.500-9z" fill="#fff" />
    ),
  },
];

const dockRecent: DockApp[] = [
  {
    bg: "bg-[#f2f2f2]",
    run: true,
    art: (
      <>
        <defs>
          <linearGradient id="sky" x1="0" y1="0" x2="0" y2="1">
            <stop offset="0" stopColor="#8fb0ea" />
            <stop offset="1" stopColor="#b4cbef" />
          </linearGradient>
        </defs>
        <path d="M4 28V11a7 7 0 0 1 7-7h30a7 7 0 0 1 7 7v17z" fill="url(#sky)" />
        <path d="M4 27h44v14a7 7 0 0 1-7 7H11a7 7 0 0 1-7-7z" fill="#2a4c8c" />
        <path d="M4 36c4-2 9 2 14 0 3-1 5 1 6 4v8H11a7 7 0 0 1-7-7z" fill="#dcdcd8" />
        <path d="M5 42c4-2 9 0 14-1l2 7H11c-4 0-6-3-6-6z" fill="#8c7a62" />
        <path d="M26 35h20l5 16a2 2 0 0 1-2 3H25a2 2 0 0 1-2-3z" fill="#d6dce2" opacity="0.950" />
        <path d="M30 40h12l3 9H28z" fill="#98a4b2" />
        <rect x="25" y="25" width="23" height="11" rx="3" fill="#17181a" />
      </>
    ),
  },
  {
    bg: "bg-linear-to-b from-[#3f9bf8] to-[#2350ee]",
    run: true,
    art: (
      <>
        <circle cx="26" cy="26" r="21.500" stroke="#b7d3fc" strokeWidth="1.500" />
        <circle cx="26" cy="26" r="18" stroke="#b7d3fc" strokeWidth="1.500" />
        <circle cx="26" cy="26" r="13" fill="#7ea8f6" stroke="#d3e2fd" strokeWidth="1.500" />
        <rect x="23" y="17" width="6" height="18" rx="1.500" fill="#2f63ee" stroke="#e4eefe" strokeWidth="1.500" />
      </>
    ),
  },
  {
    bg: "bg-[#fbfbfa]",
    run: true,
    art: (
      <>
        <path d="M9 0v52" stroke="#f0b9b4" strokeWidth="1" />
        <path d="M1 13h50M1 20h50M1 27h50M1 34h50M1 41h50" stroke="#c9c9c9" strokeWidth="1" />
        <path d="M20 54l2-9L44-3c1-3 6-1 5 2L27 46z" fill="#b9c3cc" stroke="#6d7780" strokeWidth="0.800" />
        <path d="M44-3c1-3 6-1 5 2l-3 7-5-2z" fill="#5d87a6" />
      </>
    ),
  },
  { bg: "bg-[#141414] round", run: true, art: <FaSpotify x={-0.5} y={-0.5} size={53} color="#67d470" /> },
  {
    bg: "bg-[#071c31]",
    run: true,
    art: <text x="26.500" y="36" fontSize="27" fontWeight="600" fill="#57a9f9" textAnchor="middle" letterSpacing="-1">Ps</text>,
  },
  {
    bg: "bg-linear-to-b from-[#20222f] to-[#101118]",
    run: true,
    art: <path d="M14 10h12a1.500 1.500 0 0 1 1.500 1.500V21H15.500a1.500 1.500 0 0 1-1.500-1.500zM27.500 21H39.500a1.500 1.500 0 0 1 1.500 1.500V30.500a1.500 1.500 0 0 1-1.500 1.500H27.500zM14 33.500a1.500 1.500 0 0 1 1.500-1.500H27.500V40.500a1.500 1.500 0 0 1-1.500 1.500H15.500a1.500 1.500 0 0 1-1.500-1.500z" fill="#ec6a35" />,
  },
];

function DockIcon({ app }: { app: DockApp }) {
  const feather = app.bg.endsWith("feather");
  const round = app.bg.endsWith("round");
  const bare = app.bg === "hex";
  const shape = feather ? "h-16 w-16 rounded-[16px]" : round ? "h-[52px] w-[52px] rounded-full" : "h-[52px] w-[52px] rounded-[12px]";
  return (
    <div className="relative flex h-[82px] w-[68px] shrink-0 justify-center">
      <div className={`${feather ? "mt-1.5" : "mt-3"} flex items-center justify-center ${shape} ${app.bg} ${bare ? "" : "shadow-[0_1px_2px_rgba(0,0,0,0.35)]"}`}>
        <svg
          viewBox="0 0 52 52"
          fill="none"
          className={`shrink-0 overflow-visible font-['Inter',sans-serif] ${feather ? "h-16 w-16" : "h-[52px] w-[52px]"}`}
        >
          {app.art}
        </svg>
      </div>
      {app.badge && (
        <span
          className={`absolute flex h-[26px] items-center justify-center rounded-full bg-[#e04a3d] font-medium text-white shadow-[0_1px_3px_rgba(0,0,0,0.4)] ${
            app.badge.length > 2 ? "top-[5px] right-0 w-[35px] text-[13px] tracking-[-0.4px]" : "top-[5px] right-0 w-[26px] text-base"
          }`}
        >
          {app.badge}
        </span>
      )}
      {app.run && <span className="absolute bottom-1 left-[30px] h-2 w-2 rounded-full bg-black" />}
    </div>
  );
}

function TrashIcon() {
  return (
    <svg width="52" height="62" viewBox="0 0 52 62" fill="none" className="mt-2">
      <defs>
        <linearGradient id="trash" x1="0" y1="0" x2="1" y2="0">
          <stop offset="0" stopColor="#e6e6e6" />
          <stop offset="0.500" stopColor="#c9c9ca" />
          <stop offset="1" stopColor="#dedede" />
        </linearGradient>
      </defs>
      <path d="M7 11l4-6 5 2 4-5 7 5 6-4 6 4 4-1 2 6z" fill="#e2e2e2" />
      <path d="M13 9l4-4 3 5zM26 5l5 6-7 1zM36 8l5 0-3 4z" fill="#2f3940" />
      <path d="M21 7l3 3-4 2zM33 7l3 3-3 2z" fill="#b5763f" />
      <path d="M4 8c8 4 36 4 44 0l-5 42c-.5 4-3 7-7 7H16c-4 0-6.500-3-7-7z" fill="url(#trash)" opacity="0.900" />
      <path d="M14 22l8 6-5 12zM30 20l6 10-8 8z" fill="#efefef" opacity="0.700" />
      <path d="M4 8c8 4 36 4 44 0" stroke="#f6f6f6" strokeWidth="1.500" />
    </svg>
  );
}

function DockDivider() {
  return (
    <div className="flex w-[30px] shrink-0 justify-center">
      <span className="mt-2.5 h-[62px] w-0.5 bg-[#333336]" />
    </div>
  );
}

function Dock() {
  return (
    <div className="absolute top-[2138px] left-[60px] flex h-[86px] w-[3336px] rounded-[26px] border-2 border-[#77777a] bg-[#555558] pl-1">
      {dockApps.map((a, i) => <DockIcon key={i} app={a} />)}
      <DockDivider />
      {dockRecent.map((a, i) => <DockIcon key={i} app={a} />)}
      <DockDivider />
      <div className="flex w-[68px] shrink-0 justify-center"><TrashIcon /></div>
    </div>
  );
}

export default function App() {
  return (
    <div className="relative h-[2234px] w-[3456px] overflow-hidden bg-black font-['Inter',sans-serif]">
      <EditorWindow />
      <BrowserWindow />
      <Dock />
    </div>
  );
}
